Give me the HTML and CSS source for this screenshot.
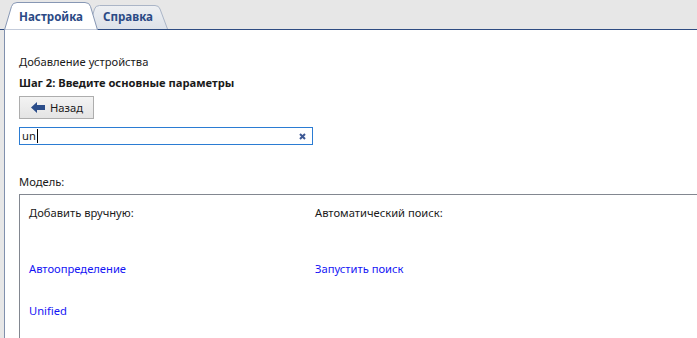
FILE: index.html
```html
<!DOCTYPE html>
<html>
<head>
	<title>Добавление устройства</title>
	<link rel="stylesheet" href="styles.css">
</head>
<body>
	<div class="tabbar">
		<div class="tab tab-active">
			<svg class="tab-bg" viewBox="0 0 94 28" preserveAspectRatio="none">
				<path d="M0.5 28 L7.5 4.5 Q8.5 0.5 13 0.5 L81 0.5 Q85.5 0.5 86.5 4.5 L93.5 28 Z" fill="#ffffff" stroke="#8797b4"/>
			</svg>
			<span class="tab-label">Настройка</span>
		</div>
		<div class="tab tab-idle">
			<svg class="tab-bg" viewBox="0 0 80 24" preserveAspectRatio="none">
				<defs>
					<linearGradient id="idle" x1="0" y1="0" x2="0" y2="1">
						<stop offset="0" stop-color="#eef0f3"/>
						<stop offset="1" stop-color="#dde2e9"/>
					</linearGradient>
				</defs>
				<path d="M0.5 24 L6.5 4 Q7.5 0.5 11.5 0.5 L67 0.5 Q71 0.5 72 4 L79.5 24" fill="url(#idle)" stroke="#aab5c7"/>
			</svg>
			<span class="tab-label">Справка</span>
		</div>
	</div>

	<div class="panel">
		<div class="title">Добавление устройства</div>
		<div class="step">Шаг 2: Введите основные параметры</div>

		<button class="back-btn">
			<svg class="back-icon" viewBox="0 0 14 11">
				<path d="M0 5.5 L6 0 L6 3 L14 3 L14 8 L6 8 L6 11 Z" fill="#2b4d8a"/>
			</svg>
			Назад
		</button>

		<div class="search">
			<span class="search-text">un</span><span class="caret"></span>
			<svg class="clear-icon" viewBox="0 0 7 7">
				<path d="M1 1 L6 6 M6 1 L1 6" stroke="#3d5894" stroke-width="2"/>
			</svg>
		</div>

		<div class="model-label">Модель:</div>
		<div class="model-box">
			<div class="col">
				<div class="col-head">Добавить вручную:</div>
				<a class="link link-first" href="#">Автоопределение</a>
				<a class="link" href="#">Unified</a>
			</div>
			<div class="col">
				<div class="col-head">Автоматический поиск:</div>
				<a class="link link-first" href="#">Запустить поиск</a>
			</div>
		</div>
	</div>
</body>
</html>
```

FILE: styles.css
```css
body {
	margin: 0;
	padding: 0;
	background-color: #e7e7e7;
	font-family: "Noto Sans", "Open Sans", sans-serif;
	font-size: 11.2px;
	line-height: 16px;
	color: #1a1a1a;
	overflow: hidden;
}

.tabbar {
	display: flex;
	align-items: flex-end;
	height: 29px;
	padding-left: 4px;
	border-bottom: 1px solid #2e4c82;
}

.tab {
	position: relative;
	display: flex;
	align-items: center;
	justify-content: center;
	font-size: 11.6px;
	font-weight: bold;
	color: #2b4a85;
}

.tab-bg {
	position: absolute;
	top: 0;
	left: 0;
	width: 100%;
	height: 100%;
}

.tab-label {
	position: relative;
}

.tab-active {
	width: 94px;
	height: 27px;
	margin-bottom: -1px;
	padding-top: 1px;
	z-index: 2;
}

.tab-idle {
	width: 80px;
	height: 24px;
	margin-left: -10px;
	z-index: 1;
}

.panel {
	display: flex;
	flex-direction: column;
	align-items: flex-start;
	box-sizing: border-box;
	height: calc(100vh - 30px);
	overflow: hidden;
	margin-left: 4px;
	border-left: 1px solid #8090ad;
	background-color: #ffffff;
	padding: 24px 0 0 14px;
}

.step {
	margin-top: 5px;
	font-weight: bold;
}

.back-btn {
	display: flex;
	align-items: center;
	gap: 5px;
	margin-top: 5px;
	width: 75px;
	height: 23px;
	padding: 0 0 0 11px;
	font-family: inherit;
	font-size: 11.2px;
	color: #1a1a1a;
	background: linear-gradient(#f3f3f3, #e4e4e4);
	border: 1px solid #adadad;
}

.back-icon {
	width: 14px;
	height: 11px;
}

.search {
	display: flex;
	align-items: center;
	margin-top: 8px;
	width: 294px;
	height: 18px;
	box-sizing: border-box;
	border: 1px solid #2b7cd3;
	padding: 0 6px 0 2px;
}

.caret {
	width: 1px;
	height: 14px;
	margin-left: 1px;
	background-color: #000000;
}

.clear-icon {
	width: 7px;
	height: 7px;
	margin-left: auto;
}

.model-label {
	margin-top: 29px;
}

.model-box {
	display: grid;
	grid-template-columns: 286px 1fr;
	align-self: stretch;
	flex: 1;
	margin-top: 4px;
	margin-bottom: -1px;
	border: 1px solid #828790;
	border-right: none;
	padding: 10px 0 0 9px;
}

.col {
	display: flex;
	flex-direction: column;
	align-items: flex-start;
}

.link {
	color: #1414f5;
	text-decoration: none;
	margin-top: 26px;
}

.link-first {
	margin-top: 40px;
}
```
